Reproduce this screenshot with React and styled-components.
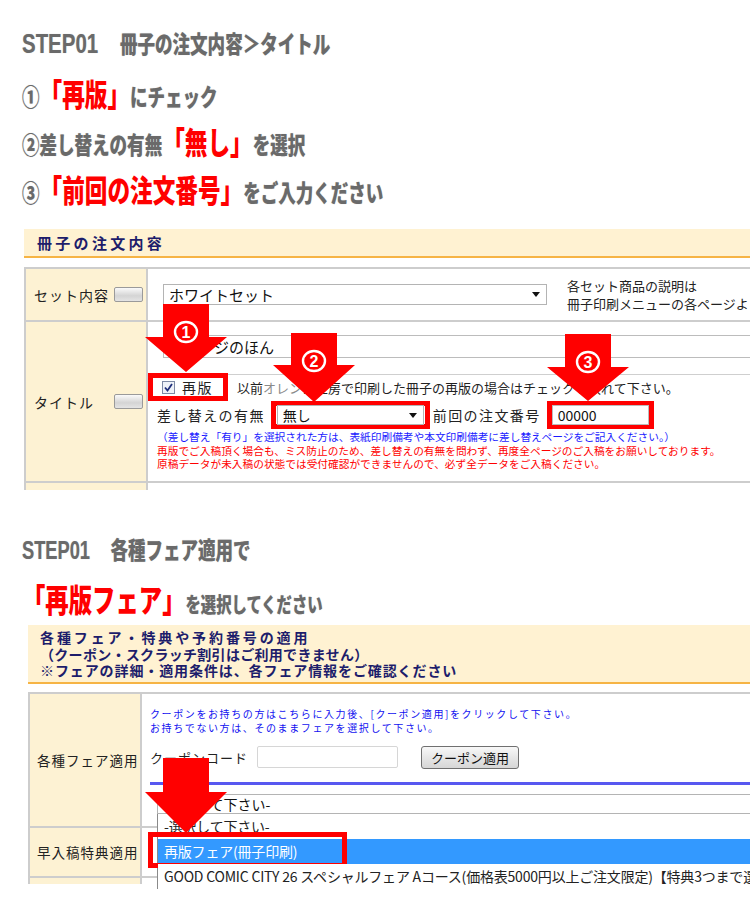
import React from 'react';
import styled, { createGlobalStyle } from 'styled-components';

const GlobalStyle = createGlobalStyle`
  html, body {
    margin: 0;
    padding: 0;
    background: #fff;
  }
  body {
    font-family: "Noto Sans CJK JP", "Noto Sans", sans-serif;
    color: #222;
  }
`;

const Page = styled.div`
  position: relative;
  width: 750px;
  height: 914px;
  overflow: hidden;
  background: #fff;
`;

/* ---------- big step headings ---------- */

const Steps = styled.div`
  padding-top: ${p => p.$top}px;
`;

const StepLine = styled.div`
  height: 48px;
  display: flex;
  align-items: center;
  padding-left: 22px;
`;

const Squeeze = styled.div`
  display: flex;
  align-items: baseline;
  white-space: nowrap;
  transform: scaleX(0.73);
  transform-origin: left center;
  font-weight: 900;
  color: #6a6a6a;
  text-shadow: 0 0 1px rgba(0, 0, 0, 0.25);
  line-height: 1;
`;

const Latin = styled.span`
  font-family: "Liberation Sans", Arial, sans-serif;
  font-weight: 700;
  font-size: ${p => p.$size}px;
  margin-right: ${p => p.$gap || 0}px;
`;

const Gray = styled.span`
  font-size: ${p => p.$size || 24}px;
`;

const Red = styled.span`
  font-size: ${p => p.$size || 31}px;
  color: #ff0000;
  text-shadow: none;
`;

/* ---------- panels ---------- */

const Panel = styled.section`
  margin-left: ${p => p.$left}px;
  margin-top: ${p => p.$top}px;
  width: 790px;
`;

const PanelHead = styled.div`
  background: #fff2d2;
  border-bottom: 2px solid #f6b445;
  padding: ${p => p.$pad};
  color: #1d1d6b;
  font-weight: 700;
  font-size: ${p => p.$size || 14}px;
  line-height: ${p => p.$lh}px;
  white-space: nowrap;
`;

const HeadLine = styled.div`
  letter-spacing: ${p => p.$ls}px;
`;

const Table = styled.div`
  margin-top: ${p => p.$gap}px;
  display: grid;
  grid-template-columns: ${p => p.$label}px 1fr;
  grid-template-rows: ${p => p.$rows};
  border-top: 2px solid #cdcdcd;
  border-left: 2px solid #cdcdcd;
`;

const LabelCell = styled.div`
  box-sizing: border-box;
  background: #fdf2d3;
  border-right: 2px solid #cdcdcd;
  border-bottom: ${p => (p.$cut ? 'none' : '2px solid #cdcdcd')};
  display: flex;
  align-items: center;
  padding-left: ${p => p.$pad}px;
  font-size: ${p => p.$size || 14}px;
  letter-spacing: 1px;
  color: #222;
  white-space: nowrap;
`;

const LabelText = styled.span`
  min-width: 80px;
`;

const MiniButton = styled.span`
  width: 27px;
  height: 13px;
  border: 1px solid #9a9a9a;
  border-radius: 2px;
  background: linear-gradient(#fafafa, #d4d4d4 60%, #e4e4e4);
`;

const DataCell = styled.div`
  box-sizing: border-box;
  position: relative;
  border-bottom: ${p => (p.$cut ? 'none' : '2px solid #cdcdcd')};
  padding: ${p => p.$pad || '0 0 0 9px'};
  display: ${p => (p.$row ? 'flex' : 'block')};
  align-items: center;
  font-size: 14px;
  white-space: nowrap;
`;

/* ---------- form parts ---------- */

const SelectBox = styled.div`
  box-sizing: border-box;
  width: ${p => p.$w}px;
  height: ${p => p.$h || 21}px;
  margin-left: ${p => p.$ml || 0}px;
  border: 1px solid #b4b4b4;
  background: #fff;
  display: flex;
  align-items: center;
  justify-content: space-between;
  padding: 0 6px 0 5px;
  font-size: ${p => p.$size || 15}px;
  color: #111;
  flex-shrink: 0;
`;

const Caret = styled.span`
  width: 0;
  height: 0;
  border-left: 4px solid transparent;
  border-right: 4px solid transparent;
  border-top: 5px solid #111;
`;

const TextBox = styled.div`
  box-sizing: border-box;
  width: ${p => p.$w}px;
  height: ${p => p.$h || 23}px;
  margin-left: ${p => p.$ml || 0}px;
  border: 1px solid ${p => p.$border || '#bcbcbc'};
  border-radius: ${p => p.$radius || 0}px;
  background: #fff;
  display: flex;
  align-items: center;
  padding-left: 5px;
  font-size: ${p => p.$size || 15}px;
  color: #111;
  flex-shrink: 0;
`;

const SetNote = styled.div`
  margin-left: 20px;
  font-size: 13px;
  line-height: 18px;
  color: #222;
`;

const TitleInputArea = styled.div`
  margin-left: -9px;
  padding: 13px 0 16px 15px;
  border-bottom: 1px solid #cfcfcf;
`;

const FormRow = styled.div`
  display: flex;
  align-items: center;
  margin-top: ${p => p.$mt || 0}px;
  height: ${p => p.$h}px;
`;

const RedFrame = styled.div`
  box-sizing: border-box;
  display: flex;
  align-items: center;
  border: 5px solid #ff0000;
  height: ${p => p.$h}px;
  margin-left: ${p => p.$ml}px;
  padding: ${p => p.$pad || '0 1px'};
  flex-shrink: 0;
`;

const CheckMark = styled.svg`
  width: 13px;
  height: 13px;
  flex-shrink: 0;
`;

const CheckLabel = styled.span`
  margin-left: 7px;
  font-size: 14px;
  letter-spacing: 1.5px;
`;

const InlineText = styled.span`
  margin-left: ${p => p.$ml || 0}px;
  font-size: ${p => p.$size || 13}px;
  letter-spacing: ${p => p.$ls || 0}px;
  color: #222;
`;

const Faint = styled.span`
  color: #8a8a8a;
`;

const Notes = styled.div`
  margin-top: 1px;
  font-size: 10.7px;
  line-height: 13.5px;
`;

const NoteLine = styled.div`
  color: ${p => p.$color};
`;

/* coupon panel */

const CouponHint = styled.div`
  font-size: 10px;
  line-height: 14px;
  letter-spacing: 1.6px;
  color: #1010f0;
`;

const CouponButton = styled.div`
  box-sizing: border-box;
  margin-left: 23px;
  width: 98px;
  height: 23px;
  border: 1px solid #707070;
  border-radius: 3px;
  background: linear-gradient(#f8f8f8, #e6e6e6 50%, #d6d6d6);
  display: flex;
  align-items: center;
  justify-content: center;
  font-size: 13px;
  color: #111;
`;

const BlueRule = styled.div`
  margin-top: 13px;
  height: 3px;
  background: #5858f0;
`;

const FairSelect = styled.div`
  position: relative;
  margin-top: 9px;
  margin-left: 7px;
`;

const OptionList = styled.div`
  position: absolute;
  left: 0;
  top: 100%;
  width: 700px;
  background: #fff;
  border-left: 1px solid #8a8a8a;
  z-index: 2;
`;

const Option = styled.div`
  position: relative;
  height: 25px;
  display: flex;
  align-items: center;
  padding-left: 6px;
  font-size: 14px;
  letter-spacing: -0.2px;
  background: ${p => (p.$active ? '#3399ff' : '#fff')};
  color: ${p => (p.$active ? '#fff' : '#222')};
`;

const OptionFrame = styled.div`
  position: absolute;
  left: -10px;
  top: -7px;
  width: 199px;
  height: 36px;
  box-sizing: border-box;
  border: 5px solid #ff0000;
`;

/* ---------- annotation arrows ---------- */

const ArrowMark = styled.svg`
  position: absolute;
  left: ${p => p.$left}px;
  top: ${p => p.$top}px;
  width: 82px;
  height: ${p => p.$h}px;
  z-index: 5;
  overflow: visible;
`;

function Arrow({ left, top, shaft = 33, head = 35, num }) {
  const h = shaft + head;
  return (
    <ArrowMark $left={left} $top={top} $h={h} viewBox={`0 0 82 ${h}`}>
      <polygon
        points={`18,0 64,0 64,${shaft} 82,${shaft} 41,${h} 0,${shaft} 18,${shaft}`}
        fill="#ff0000"
      />
      {num && (
        <g>
          <ellipse cx="41" cy="28" rx="11" ry="10" fill="none" stroke="#fff" strokeWidth="2.4" />
          <text
            x="41"
            y="34"
            textAnchor="middle"
            fill="#fff"
            fontSize="16"
            fontWeight="700"
            fontFamily="Liberation Sans, Arial, sans-serif"
          >
            {num}
          </text>
        </g>
      )}
    </ArrowMark>
  );
}

function Checked() {
  return (
    <CheckMark viewBox="0 0 13 13">
      <rect x="0.5" y="0.5" width="12" height="12" fill="#eef2f8" stroke="#7d8aa5" />
      <path d="M3 6.5 L5.5 9.5 L10 3" fill="none" stroke="#1f2f7a" strokeWidth="1.8" />
    </CheckMark>
  );
}

export default function App() {
  return (
    <Page>
      <GlobalStyle />

      <Steps $top={20}>
        <StepLine>
          <Squeeze>
            <Latin $size={28} $gap={6}>STEP01</Latin>
            <Gray>　冊子の注文内容＞タイトル</Gray>
          </Squeeze>
        </StepLine>
        <StepLine>
          <Squeeze>
            <Gray>①</Gray>
            <Red>「再版」</Red>
            <Gray>にチェック</Gray>
          </Squeeze>
        </StepLine>
        <StepLine>
          <Squeeze>
            <Gray>②差し替えの有無</Gray>
            <Red>「無し」</Red>
            <Gray>を選択</Gray>
          </Squeeze>
        </StepLine>
        <StepLine>
          <Squeeze>
            <Gray>③</Gray>
            <Red>「前回の注文番号」</Red>
            <Gray>をご入力ください</Gray>
          </Squeeze>
        </StepLine>
      </Steps>

      <Panel $left={24} $top={17}>
        <PanelHead $pad="0 13px" $lh={27} $size={15}>
          <HeadLine $ls={3.3}>冊子の注文内容</HeadLine>
        </PanelHead>
        <Table $gap={9} $label={122} $rows="53px 161px 7px">
          <LabelCell $pad={8}>
            <LabelText>セット内容</LabelText>
            <MiniButton />
          </LabelCell>
          <DataCell $row>
            <SelectBox $w={384} $ml={6}>
              ホワイトセット
              <Caret />
            </SelectBox>
            <SetNote>
              各セット商品の説明は
              <br />
              冊子印刷メニューの各ページよりご確認ください。
            </SetNote>
          </DataCell>

          <LabelCell $pad={8}>
            <LabelText>タイトル</LabelText>
            <MiniButton />
          </LabelCell>
          <DataCell>
            <TitleInputArea>
              <TextBox $w={640}>オレンジのほん</TextBox>
            </TitleInputArea>
            <FormRow $mt={-2} $h={28}>
              <RedFrame $h={28} $ml={-9} $pad="0 10px 0 9px">
                <Checked />
                <CheckLabel>再版</CheckLabel>
              </RedFrame>
              <InlineText $ml={9}>
                以前<Faint>オレン</Faint>ジ工房で印刷した冊子の再版の場合はチェックを入れて下さい。
              </InlineText>
            </FormRow>
            <FormRow $h={28}>
              <InlineText $size={14} $ls={1.4}>差し替えの有無</InlineText>
              <RedFrame $h={28} $ml={6}>
                <SelectBox $w={147} $h={20} $size={14}>
                  無し
                  <Caret />
                </SelectBox>
              </RedFrame>
              <InlineText $ml={3} $size={14} $ls={1.4}>前回の注文番号</InlineText>
              <RedFrame $h={28} $ml={6} $pad="0">
                <TextBox $w={97} $h={20} $size={14}>00000</TextBox>
              </RedFrame>
            </FormRow>
            <Notes>
              <NoteLine $color="#1a1aff">
                （差し替え「有り」を選択された方は、表紙印刷備考や本文印刷備考に差し替えページをご記入ください。）
              </NoteLine>
              <NoteLine $color="#ff0000">
                再版でご入稿頂く場合も、ミス防止のため、差し替えの有無を問わず、再度全ページのご入稿をお願いしております。
              </NoteLine>
              <NoteLine $color="#ff0000">
                原稿データが未入稿の状態では受付確認ができませんので、必ず全データをご入稿ください。
              </NoteLine>
            </Notes>
          </DataCell>

          <LabelCell $cut />
          <DataCell $cut />
        </Table>
      </Panel>

      <Steps $top={36}>
        <StepLine>
          <Squeeze>
            <Latin $size={25} $gap={4}>STEP01</Latin>
            <Gray>　各種フェア適用で</Gray>
          </Squeeze>
        </StepLine>
        <StepLine>
          <Squeeze>
            <Red $size={32}>「再版フェア」</Red>
            <Gray $size={21}>を選択してください</Gray>
          </Squeeze>
        </StepLine>
      </Steps>

      <Panel $left={28} $top={3}>
        <PanelHead $pad="4px 12px 3px" $lh={16.5}>
          <HeadLine $ls={2.9}>各種フェア・特典や予約番号の適用</HeadLine>
          <HeadLine $ls={0.3}>（クーポン・スクラッチ割引はご利用できません）</HeadLine>
          <HeadLine $ls={0.9}>※フェアの詳細・適用条件は、各フェア情報をご確認ください</HeadLine>
        </PanelHead>
        <Table $gap={8} $label={112} $rows="134px 50px 6px">
          <LabelCell $pad={7} $size={13.5}>各種フェア適用</LabelCell>
          <DataCell $pad="13px 0 0 8px">
            <CouponHint>
              クーポンをお持ちの方はこちらに入力後、[クーポン適用]をクリックして下さい。
              <br />
              お持ちでない方は、そのままフェアを選択して下さい。
            </CouponHint>
            <FormRow $mt={11} $h={23}>
              <InlineText $size={13} $ls={1}>クーポンコード</InlineText>
              <TextBox $w={141} $h={22} $ml={9} $border="#d6d6d6" $radius={2} />
              <CouponButton>クーポン適用</CouponButton>
            </FormRow>
            <BlueRule />
            <FairSelect>
              <SelectBox $w={700} $h={20} $size={14}>
                -選択して下さい-
              </SelectBox>
              <OptionList>
                <Option>-選択して下さい-</Option>
                <Option $active>
                  再版フェア(冊子印刷)
                  <OptionFrame />
                </Option>
                <Option>
                  GOOD COMIC CITY 26 スペシャルフェア Aコース(価格表5000円以上ご注文限定)【特典3つまで選択可】
                </Option>
              </OptionList>
            </FairSelect>
          </DataCell>

          <LabelCell $pad={7} $size={13.5}>早入稿特典適用</LabelCell>
          <DataCell />

          <LabelCell $cut />
          <DataCell $cut />
        </Table>
      </Panel>

      <Arrow left={145} top={304} num="1" />
      <Arrow left={273} top={333} shaft={32} head={37} num="2" />
      <Arrow left={547} top={334} head={34} num="3" />
      <Arrow left={145} top={758} shaft={34} head={41} />
    </Page>
  );
}
